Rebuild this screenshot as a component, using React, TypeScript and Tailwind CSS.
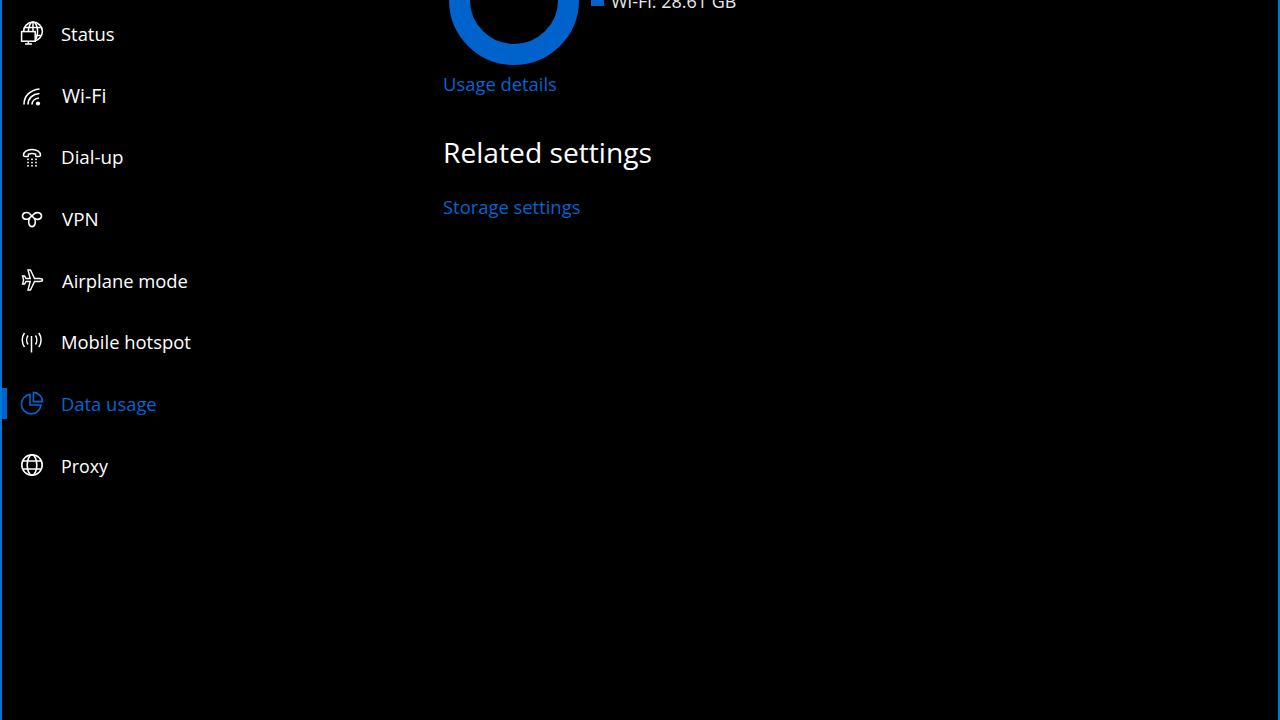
import React from "react";

const s = { fill: "none", stroke: "currentColor", strokeWidth: 1.5 } as const;

const StatusIcon = () => (
  <svg width="24" height="24" viewBox="0 0 24 24" {...s}>
    <circle cx="13" cy="10.5" r="9.4" />
    <ellipse cx="13" cy="10.5" rx="4.6" ry="9.4" />
    <path d="M13 1V20M4.5 6.5H21.5M14 14.5H21.5" />
    <rect x="1.6" y="10.6" width="13.6" height="9.6" fill="#000" />
    <path d="M8.4 20.2V22.6M5 23H12" />
  </svg>
);
const WifiIcon = () => (
  <svg width="24" height="24" viewBox="0 0 24 24" {...s} strokeWidth="1.6">
    <path d="M4 21.5C4 13 10 7 19.5 6" />
    <path d="M8 21.5C8 15.5 12.5 11 19.5 10.5" />
    <path d="M12 21.5C12 18 15 15.5 19 15" />
    <circle cx="18" cy="20.5" r="2.1" fill="currentColor" stroke="none" />
  </svg>
);
const DialIcon = () => (
  <svg width="24" height="24" viewBox="0 0 24 24" {...s}>
    <path d="M3.5 10.5C3.3 7 7 4.5 12 4.5S20.7 7 20.5 10.5C20.4 11.2 19.8 11.5 19 11.5H16.6C16 11.5 15.6 11 15.6 10.4V9.2C14 8.3 10 8.3 8.4 9.2V10.4C8.4 11 8 11.5 7.4 11.5H5C4.2 11.5 3.6 11.2 3.5 10.5Z" />
    <g fill="currentColor" stroke="none">
      <rect x="7.2" y="13.5" width="1.6" height="1.6" /><rect x="11.2" y="13.5" width="1.6" height="1.6" /><rect x="15.2" y="13.5" width="1.6" height="1.6" />
      <rect x="7.2" y="16.8" width="1.6" height="1.6" /><rect x="11.2" y="16.8" width="1.6" height="1.6" /><rect x="15.2" y="16.8" width="1.6" height="1.6" />
      <rect x="7.2" y="20" width="1.6" height="1.6" /><rect x="11.2" y="20" width="1.6" height="1.6" /><rect x="15.2" y="20" width="1.6" height="1.6" />
    </g>
  </svg>
);
const VpnIcon = () => (
  <svg width="24" height="24" viewBox="0 0 24 24" {...s} strokeWidth="1.6">
    <path d="M9.2 7.2C7 5.8 2.5 6.4 2.5 10C2.5 13.6 7 14 9.4 12.2L14.4 7.6C16.5 5.8 21.5 6.4 21.5 10C21.5 13.6 17 14 14.6 12.4" />
    <path d="M9.2 7.2L14.2 12.2C16.4 14.6 15.4 20.6 12 20.6C8.6 20.6 7.6 14.6 9.8 12.4" />
  </svg>
);
const PlaneIcon = () => (
  <svg width="24" height="24" viewBox="0 0 24 24" {...s} strokeWidth="1.4">
    <path d="M22.5 12C22.5 13 21 13.5 19.5 13.5H14.5L10.5 22H8L10.2 13.5H6L4.6 16H2.6L3.6 12L2.6 8H4.6L6 10.5H10.2L8 2H10.5L14.5 10.5H19.5C21 10.5 22.5 11 22.5 12Z" />
  </svg>
);
const HotspotIcon = () => (
  <svg width="24" height="24" viewBox="0 0 24 24" {...s}>
    <path d="M11.5 6V22.5" />
    <path d="M8 5.5C6.3 8 6.3 12 8 14.5M15.5 5.5C17.2 8 17.2 12 15.5 14.5" />
    <path d="M4.5 3C1.5 7 1.5 13 4.5 17M18.8 3C21.8 7 21.8 13 18.8 17" />
  </svg>
);
const DataIcon = () => (
  <svg width="24" height="24" viewBox="0 0 24 24" {...s} strokeWidth="1.6">
    <path d="M10 3.4A9.8 9.8 0 1 0 21 14H10V3.4Z" />
    <path d="M13.4 1.4C18.4 1.6 22.4 5.6 22.6 10.6H13.4V1.4Z" />
  </svg>
);
const ProxyIcon = () => (
  <svg width="24" height="24" viewBox="0 0 24 24" {...s} strokeWidth="1.6">
    <circle cx="12" cy="12" r="10.2" />
    <ellipse cx="12" cy="12" rx="4.8" ry="10.2" />
    <path d="M2.8 8H21.2M2.8 16H21.2" />
  </svg>
);

const items = [
  { label: "Status", Icon: StatusIcon, x: "ml-[17px]" },
  { label: "Wi-Fi", Icon: WifiIcon, x: "ml-[18px] text-[19.6px]" },
  { label: "Dial-up", Icon: DialIcon, x: "ml-[17px] text-[18.8px]" },
  { label: "VPN", Icon: VpnIcon, x: "ml-[18px] text-[18.8px]" },
  { label: "Airplane mode", Icon: PlaneIcon, x: "ml-[18px]" },
  { label: "Mobile hotspot", Icon: HotspotIcon, x: "ml-[17px]" },
  { label: "Data usage", Icon: DataIcon, x: "ml-[17px]", active: true },
  { label: "Proxy", Icon: ProxyIcon, x: "ml-[17px] text-[17.8px] mt-[1px]" },
];

export default function App() {
  return (
    <div className="w-[1280px] h-[720px] overflow-hidden bg-black border-x-2 border-[#0078d7] flex text-white font-['Open_Sans','Noto_Sans',sans-serif]">
      <nav className="w-[441px] shrink-0 pt-[3.4px]">
        {items.map(({ label, Icon, x, active }) => (
          <div
            key={label}
            className={`relative h-[61.7px] flex items-center pl-[18px] text-[18.4px] ${active ? "text-[#0066d0]" : "text-white"}`}
          >
            {active && <span className="absolute left-0 top-[14px] w-[5px] h-[31px] bg-[#0063cc]" />}
            <span className="w-[24px] h-[24px] flex shrink-0 -mt-[2px]"><Icon /></span>
            <span className={`${x} leading-none`}>{label}</span>
          </div>
        ))}
      </nav>
      <main className="flex-1 -mt-[65px]">
        <div className="flex items-start ml-[6px]">
          <svg width="130" height="130" viewBox="0 0 130 130" className="shrink-0">
            <circle cx="65" cy="65" r="54.5" fill="none" stroke="#0063cc" strokeWidth="21" />
          </svg>
          <div className="ml-[12px] mt-[58px] flex items-center text-[18px] leading-[16px] text-[#e6e6e6]">
            <span className="w-[13px] h-[13px] bg-[#0063cc] -mt-[3px]" />
            <span className="ml-[7px]">Wi-Fi: 28.61 GB</span>
          </div>
        </div>
        <div className="mt-[6px] text-[18.4px] leading-[26px] text-[#0066d0]">Usage details</div>
        <h2 className="mt-[35px] text-[28.2px] leading-[40px] font-normal text-white">Related settings</h2>
        <div className="mt-[22px] text-[18.4px] leading-[26px] text-[#0066d0]">Storage settings</div>
      </main>
    </div>
  );
}
